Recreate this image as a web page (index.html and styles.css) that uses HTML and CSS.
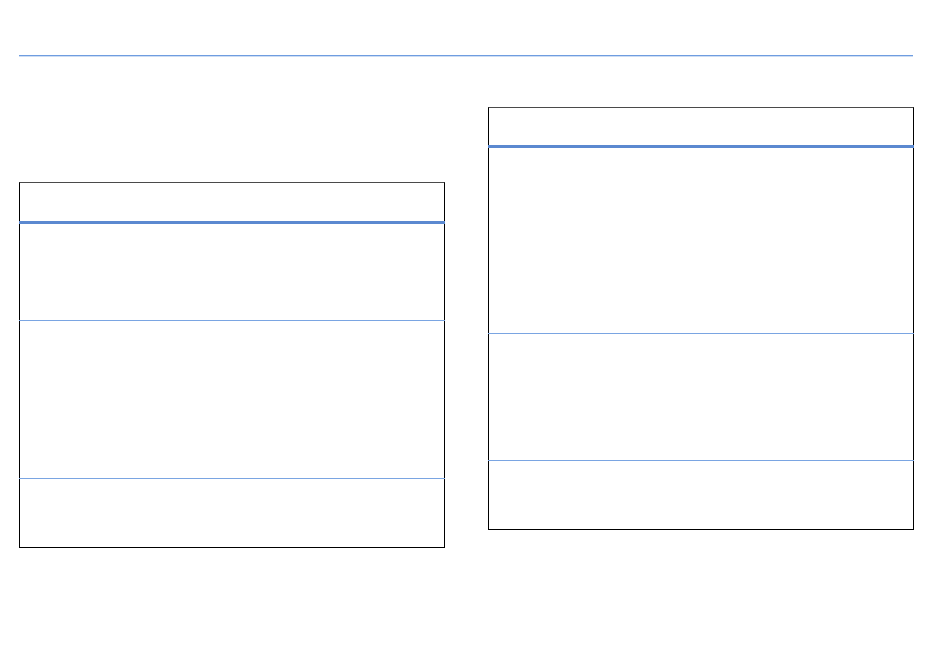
FILE: index.html
```html
<!DOCTYPE html>
<html lang="en">
<head>
<meta charset="utf-8">
<title>Layout</title>
<link rel="stylesheet" href="styles.css">
</head>
<body>
<div class="page">
  <div class="rule"></div>
  <div class="columns">
    <div class="col col-left">
      <div class="panel">
        <div class="panel-head head-left"></div>
        <div class="row row-l1"></div>
        <div class="row row-l2"></div>
        <div class="row-last"></div>
      </div>
    </div>
    <div class="col col-right">
      <div class="panel">
        <div class="panel-head head-right"></div>
        <div class="row row-r1"></div>
        <div class="row row-r2"></div>
        <div class="row-last"></div>
      </div>
    </div>
  </div>
</div>
</body>
</html>
```
FILE: styles.css
```css
html, body {
  margin: 0;
  padding: 0;
  background: #ffffff;
  font-family: "Liberation Sans", Arial, sans-serif;
}
.page {
  width: 895px;
  margin-left: 19px;
  padding-top: 55px;
}
.rule {
  height: 1px;
  width: 894px;
  background: #6f9de0;
  box-shadow: 0 1px 0 rgba(111, 157, 224, 0.35);
}
.columns {
  display: flex;
  align-items: flex-start;
  gap: 43px;
}
.col {
  width: 426px;
  flex: 0 0 426px;
}
.col-left {
  padding-top: 126px;
}
.col-right {
  padding-top: 51px;
}
.panel {
  border: 1px solid #000000;
  border-top-color: #4a4a4a;
  box-sizing: border-box;
  display: flex;
  flex-direction: column;
}
.panel-head {
  margin: 0 -1px;
  border-bottom: 3px solid #5b89d0;
}
.head-left {
  height: 38px;
}
.head-right {
  height: 37px;
}
.row {
  margin: 0 -1px;
  border-bottom: 1px solid #7aa5e2;
}
.row-l1 { height: 96px; }
.row-l2 { height: 157px; }
.row-r1 { height: 185px; }
.row-r2 { height: 126px; }
.row-last { height: 68px; }
```
